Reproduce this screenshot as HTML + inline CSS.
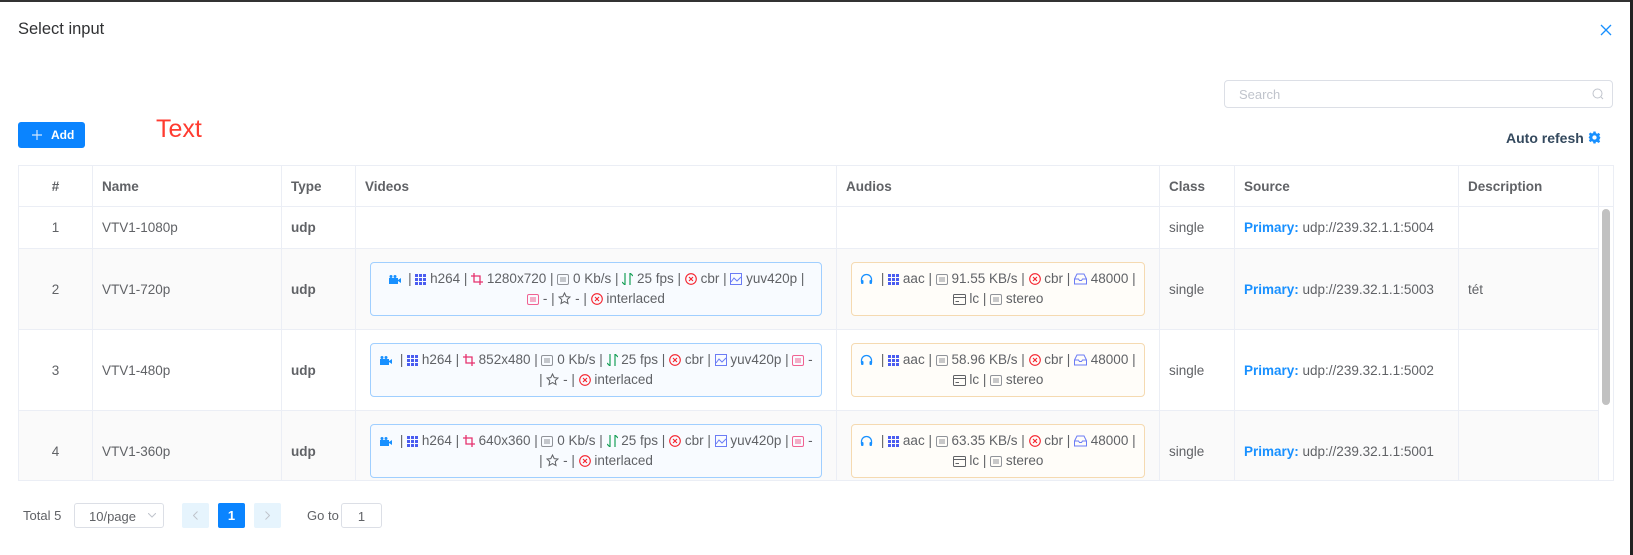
<!DOCTYPE html>
<html><head><meta charset="utf-8">
<style>
*{box-sizing:border-box;margin:0;padding:0}
body{width:1633px;height:555px;overflow:hidden;background:#fff;font-family:"Liberation Sans",sans-serif;color:#606266;position:relative}
.abs{position:absolute}
.topbar{left:0;top:0;width:1633px;height:2px;background:#333}
.rightbar{right:0;top:0;width:3px;height:555px;background:#222}
table{border-collapse:collapse;table-layout:fixed}
td,th{border:1px solid #ebeef5;font-size:13.5px;padding:0 0 0 9px;text-align:left;vertical-align:middle}
th{font-weight:bold;color:#606266;height:41px}
td.c,th.c{text-align:center;padding:0}
tr.s td{background:#fafafa}
.chip{border-radius:4px;padding:6px 6px;text-align:center;font-size:13.5px;line-height:20px;color:#606266;margin:0 14px}
.v{border:1px solid #a0cfff;background:#f8fbff}
.a{border:1px solid #f5dab1;background:#fffdf9}
svg{vertical-align:-2px}
.p{color:#1890ff;font-weight:bold}
</style></head><body>
<div class="abs topbar"></div>
<div class="abs rightbar"></div>
<div class="abs" style="left:18px;top:20px;font-size:16.5px;color:#303133">Select input</div>
<svg class="abs" style="left:1600px;top:24px" width="12" height="12" viewBox="0 0 12 12"><path d="M1 1L11 11M11 1L1 11" stroke="#1890ff" stroke-width="1.3"/></svg>
<div class="abs" style="left:1224px;top:80px;width:389px;height:28px;border:1px solid #dcdfe6;border-radius:4px;font-size:13px;color:#c0c4cc;padding:6px 0 0 14px">Search</div>
<svg class="abs" style="left:1592px;top:88px" width="12" height="12" viewBox="0 0 12 12"><circle cx="5.5" cy="5.5" r="4.5" fill="none" stroke="#c0c4cc" stroke-width="1"/><path d="M9 9L11 11" stroke="#c0c4cc"/></svg>
<div class="abs" style="left:18px;top:122px;width:67px;height:26px;background:#0a84ff;border-radius:3px;color:#fff;font-size:12px;font-weight:bold;padding:6px 0 0 33px">Add</div>
<svg class="abs" style="left:32px;top:130px" width="10" height="10" viewBox="0 0 10 10"><path d="M5 0V10M0 5H10" stroke="#cfe6ff" stroke-width="1.2"/></svg>
<div class="abs" style="left:156px;top:115px;font-size:25px;color:#ff3b30">Text</div>
<div class="abs" style="left:1506px;top:130px;font-size:14px;font-weight:bold;color:#34495e">Auto refesh</div>
<svg class="abs" style="left:1588px;top:131px" width="13" height="13" viewBox="0 0 24 24"><path fill="#1890ff" d="M10 1h4l.6 3 2.3 1.2 2.7-1.7 2.8 2.8-1.7 2.7L21.9 11 23 12v0l-1.1 2.3-1.2 2.3 1.7 2.7-2.8 2.8-2.7-1.7L14.6 20 14 23h-4l-.6-3-2.3-1.2-2.7 1.7-2.8-2.8 1.7-2.7L2.1 13 1 12l1.1-1.4 1.2-2.3-1.7-2.7 2.8-2.8 2.7 1.7L9.4 4zM12 8a4 4 0 100 8 4 4 0 000-8z"/></svg>

<div class="abs" style="left:18px;top:165px;width:1596px;height:316px;overflow:hidden;border-bottom:1px solid #ebeef5;border-right:1px solid #ebeef5">
<table style="width:1595px">
<colgroup><col style="width:74px"><col style="width:189px"><col style="width:74px"><col style="width:481px"><col style="width:323px"><col style="width:75px"><col style="width:224px"><col style="width:140px"><col style="width:15px"></colgroup>
<tr><th class="c">#</th><th>Name</th><th>Type</th><th>Videos</th><th>Audios</th><th>Class</th><th>Source</th><th>Description</th><th></th></tr>
<tr style="height:42px"><td class="c">1</td><td>VTV1-1080p</td><td><b>udp</b></td><td></td><td></td><td>single</td><td><span class="p">Primary:</span> udp://239.32.1.1:5004</td><td></td><td rowspan="4" style="padding:0"></td></tr>
<tr class="s" style="height:81px"><td class="c">2</td><td>VTV1-720p</td><td><b>udp</b></td>
<td style="padding:0"><div class="chip v">CAM | GRID h264 | CROP 1280x720 | BOX 0 Kb/s | FPS 25 fps | X cbr | IMG yuv420p |<br>PBOX - | STAR - | X interlaced</div></td>
<td style="padding:0"><div class="chip a">HP | GRID aac | BOX 91.55 KB/s | X cbr | INB 48000 |<br>CARD lc | BOX stereo</div></td>
<td>single</td><td><span class="p">Primary:</span> udp://239.32.1.1:5003</td><td>tét</td></tr>
<tr style="height:81px"><td class="c">3</td><td>VTV1-480p</td><td><b>udp</b></td>
<td style="padding:0"><div class="chip v">CAM | GRID h264 | CROP 852x480 | BOX 0 Kb/s | FPS 25 fps | X cbr | IMG yuv420p | PBOX -<br>| STAR - | X interlaced</div></td>
<td style="padding:0"><div class="chip a">HP | GRID aac | BOX 58.96 KB/s | X cbr | INB 48000 |<br>CARD lc | BOX stereo</div></td>
<td>single</td><td><span class="p">Primary:</span> udp://239.32.1.1:5002</td><td></td></tr>
<tr class="s" style="height:81px"><td class="c">4</td><td>VTV1-360p</td><td><b>udp</b></td>
<td style="padding:0"><div class="chip v">CAM | GRID h264 | CROP 640x360 | BOX 0 Kb/s | FPS 25 fps | X cbr | IMG yuv420p | PBOX -<br>| STAR - | X interlaced</div></td>
<td style="padding:0"><div class="chip a">HP | GRID aac | BOX 63.35 KB/s | X cbr | INB 48000 |<br>CARD lc | BOX stereo</div></td>
<td>single</td><td><span class="p">Primary:</span> udp://239.32.1.1:5001</td><td></td></tr>
</table>
</div>
<div class="abs" style="left:1602px;top:209px;width:8px;height:196px;background:#c1c1c1;border-radius:4px"></div>

<div class="abs" style="left:23px;top:508px;font-size:13px">Total 5</div>
<div class="abs" style="left:74px;top:503px;width:90px;height:25px;border:1px solid #dcdfe6;border-radius:3px;font-size:13px;padding:5px 0 0 14px">10/page</div>
<svg class="abs" style="left:148px;top:513px" width="8" height="5" viewBox="0 0 8 5"><path d="M0 0L4 4L8 0" fill="none" stroke="#c0c4cc"/></svg>
<div class="abs" style="left:182px;top:503px;width:27px;height:25px;background:#e6f4fd;border-radius:2px"></div>
<svg class="abs" style="left:193px;top:511px" width="5" height="9" viewBox="0 0 5 9"><path d="M4.5 0.5L0.5 4.5L4.5 8.5" fill="none" stroke="#c0c4cc"/></svg>
<div class="abs" style="left:218px;top:503px;width:27px;height:25px;background:#0a84ff;border-radius:2px;color:#fff;font-weight:bold;font-size:13px;text-align:center;padding-top:5px">1</div>
<div class="abs" style="left:254px;top:503px;width:27px;height:25px;background:#e6f4fd;border-radius:2px"></div>
<svg class="abs" style="left:265px;top:511px" width="5" height="9" viewBox="0 0 5 9"><path d="M0.5 0.5L4.5 4.5L0.5 8.5" fill="none" stroke="#c0c4cc"/></svg>
<div class="abs" style="left:307px;top:508px;font-size:13px">Go to</div>
<div class="abs" style="left:341px;top:503px;width:41px;height:25px;border:1px solid #dcdfe6;border-radius:3px;font-size:13px;text-align:center;padding-top:5px">1</div>

<script>
var I={
CAM:'<svg width="13" height="11" viewBox="0 0 13 11"><path fill="#1890ff" d="M1 4h9v6H1zM10 6l3-2v5l-3-2zM3 1a1.5 1.5 0 110 3 1.5 1.5 0 010-3zM7 1a1.5 1.5 0 110 3 1.5 1.5 0 010-3z"/></svg>&nbsp;',
GRID:'<svg width="11" height="11" viewBox="0 0 11 11" fill="#4a5cf0"><rect x="0" y="0" width="3" height="3"/><rect x="4" y="0" width="3" height="3"/><rect x="8" y="0" width="3" height="3"/><rect x="0" y="4" width="3" height="3"/><rect x="4" y="4" width="3" height="3"/><rect x="8" y="4" width="3" height="3"/><rect x="0" y="8" width="3" height="3"/><rect x="4" y="8" width="3" height="3"/><rect x="8" y="8" width="3" height="3"/></svg>',
CROP:'<svg width="12" height="12" viewBox="0 0 12 12"><path d="M3 0V9H12M0 3H9V12" fill="none" stroke="#e6326e" stroke-width="1.3"/></svg>',
BOX:'<svg width="12" height="11" viewBox="0 0 12 11"><rect x="0.5" y="0.5" width="11" height="10" rx="1.5" fill="none" stroke="#909399"/><path d="M4 3V8M6 3V8M8 3V8" stroke="#909399"/></svg>',
PBOX:'<svg width="12" height="11" viewBox="0 0 12 11"><rect x="0.5" y="0.5" width="11" height="10" rx="1.5" fill="none" stroke="#f06292"/><path d="M4 3V8M6 3V8M8 3V8" stroke="#f06292"/></svg>',
FPS:'<svg width="11" height="12" viewBox="0 0 11 12"><path d="M3 0V12M0 9L3 12M8 12V0M11 3L8 0" fill="none" stroke="#18a058" stroke-width="1.2"/></svg>',
X:'<svg width="12" height="12" viewBox="0 0 12 12"><circle cx="6" cy="6" r="5.3" fill="none" stroke="#f5222d" stroke-width="1.1"/><path d="M4 4L8 8M8 4L4 8" stroke="#f5222d" stroke-width="1.1"/></svg>',
IMG:'<svg width="12" height="12" viewBox="0 0 12 12"><rect x="0.5" y="0.5" width="11" height="11" fill="none" stroke="#6b7cf5"/><path d="M1 9L4 5L7 8L11 4" fill="none" stroke="#6b7cf5"/></svg>',
STAR:'<svg width="13" height="13" viewBox="0 0 13 13"><path d="M6.5 1L8.2 4.6L12 5L9.2 7.6L10 11.5L6.5 9.6L3 11.5L3.8 7.6L1 5L4.8 4.6Z" fill="none" stroke="#606266"/></svg>',
HP:'<svg width="13" height="12" viewBox="0 0 13 12"><path d="M1.5 9V6.5a5 5 0 0110 0V9" fill="none" stroke="#1890ff" stroke-width="1.3"/><rect x="1" y="7" width="2.5" height="4" rx="1" fill="#1890ff"/><rect x="9.5" y="7" width="2.5" height="4" rx="1" fill="#1890ff"/></svg>&nbsp;',
INB:'<svg width="13" height="12" viewBox="0 0 13 12"><path d="M0.5 6L3 1H10L12.5 6V11H0.5ZM0.5 6H4.5L5.5 7.5H7.5L8.5 6H12.5" fill="none" stroke="#6b7cf5"/></svg>',
CARD:'<svg width="13" height="11" viewBox="0 0 13 11"><rect x="0.5" y="0.5" width="12" height="10" rx="1" fill="none" stroke="#606266"/><path d="M0.5 3.5H12.5M2.5 7.5H6" stroke="#606266"/></svg>'
};
document.querySelectorAll('.chip').forEach(function(c){
 c.innerHTML=c.innerHTML.replace(/\b(CAM|GRID|CROP|PBOX|BOX|FPS|X|IMG|STAR|HP|INB|CARD) /g,function(m,k){return I[k]+' ';});
});
</script>
</body></html>
